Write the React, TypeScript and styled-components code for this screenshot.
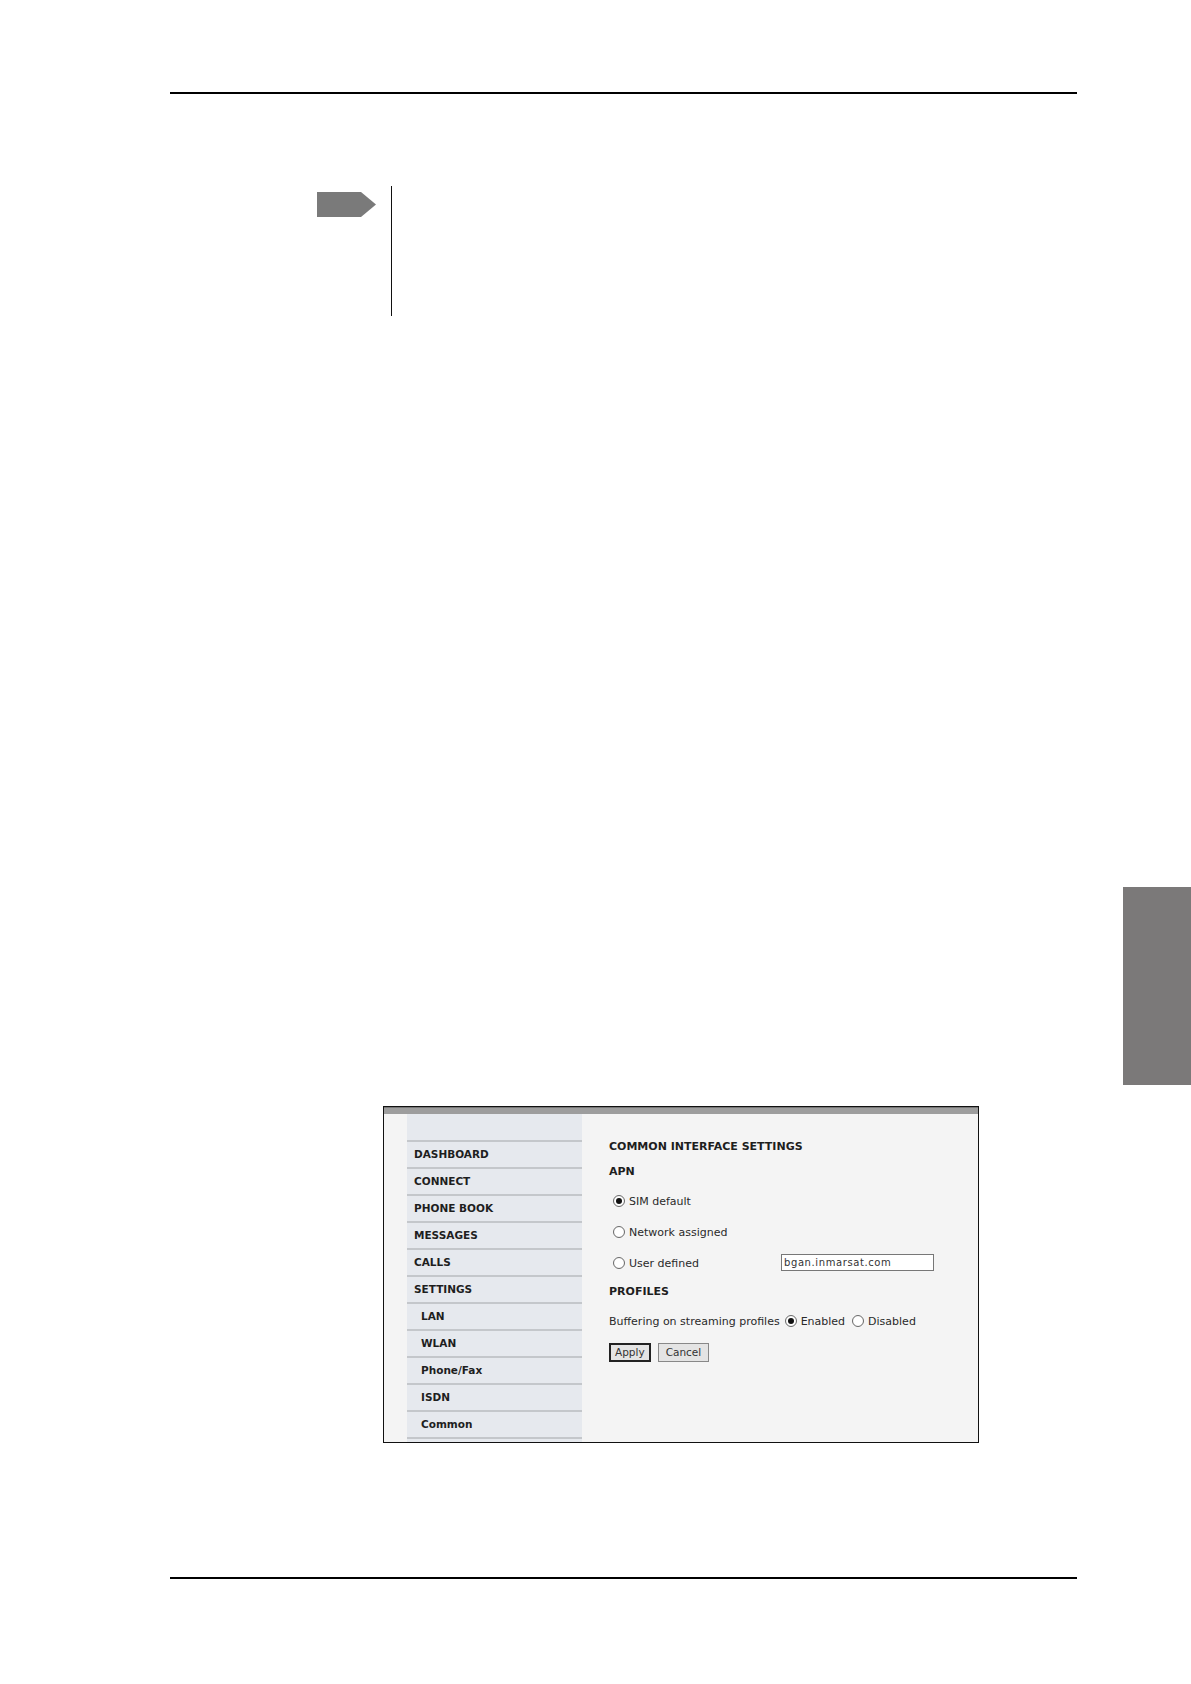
import styled, { createGlobalStyle } from "styled-components";

const GlobalStyle = createGlobalStyle`
  html, body {
    margin: 0;
    padding: 0;
    background: #fff;
  }
  body {
    font-family: "DejaVu Sans", Verdana, sans-serif;
    color: #1e1e1e;
  }
`;

const Page = styled.div`
  width: 1191px;
  height: 1684px;
  box-sizing: border-box;
  padding-top: 92px;
  display: flex;
  flex-direction: column;
  background: #fff;
  overflow: hidden;
`;

const Rule = styled.div<{ $top?: number }>`
  margin: ${(p) => p.$top ?? 0}px 0 0 170px;
  width: 907px;
  height: 2px;
  background: #000;
  flex-shrink: 0;
`;

const Note = styled.div`
  display: flex;
  margin: 92px 0 0 317px;
  height: 130px;
`;

const NoteMarker = styled.div`
  width: 74px;
  padding-top: 6px;
`;

const NoteLine = styled.div`
  width: 1px;
  background: #111;
`;

const TabRow = styled.div`
  display: flex;
  justify-content: flex-end;
  margin-top: 571px;
`;

const SideTab = styled.div`
  width: 68px;
  height: 198px;
  background: #7b7979;
`;

const Panel = styled.div`
  margin: 21px 0 0 383px;
  width: 596px;
  height: 337px;
  box-sizing: border-box;
  border: 1px solid #111;
  background: #f4f4f4;
  display: flex;
  flex-direction: column;
`;

const TopBar = styled.div`
  height: 7px;
  background: #9d9d9d;
  border-top: 1px solid #777;
  box-sizing: border-box;
`;

const Body = styled.div`
  flex: 1;
  display: flex;
`;

const Sidebar = styled.nav`
  margin-left: 23px;
  width: 175px;
  background: #e6e9ee;
  padding-top: 26px;
  display: flex;
  flex-direction: column;
`;

const NavItem = styled.div<{ $sub?: boolean }>`
  height: 25px;
  line-height: 24px;
  border-top: 2px solid #c4c7cb;
  padding-left: ${(p) => (p.$sub ? 14 : 7)}px;
  font-size: 10.5px;
  font-weight: bold;
  color: #1e1e1e;
`;

const NavEnd = styled.div`
  border-top: 2px solid #c4c7cb;
`;

const Content = styled.div`
  padding-left: 27px;
  display: flex;
  flex-direction: column;
`;

const Heading = styled.div<{ $top: number }>`
  margin-top: ${(p) => p.$top}px;
  height: 14px;
  line-height: 14px;
  font-size: 11px;
  font-weight: bold;
  color: #1e1e1e;
`;

const Row = styled.div<{ $top: number; $indent?: number }>`
  margin-top: ${(p) => p.$top}px;
  height: 20px;
  display: flex;
  align-items: center;
  padding-left: ${(p) => p.$indent ?? 0}px;
  font-size: 11px;
  color: #2a2a2a;
`;

const Option = styled.label<{ $width?: number }>`
  display: flex;
  align-items: center;
  width: ${(p) => (p.$width ? `${p.$width}px` : "auto")};
`;

const Radio = styled.span<{ $checked?: boolean }>`
  width: 12px;
  height: 12px;
  box-sizing: border-box;
  border-radius: 50%;
  border: 1px solid #6a6a6a;
  background: radial-gradient(circle, #fff 55%, #e4e4e4 100%);
  margin-right: 4px;
  display: flex;
  align-items: center;
  justify-content: center;
  &::after {
    content: "";
    display: ${(p) => (p.$checked ? "block" : "none")};
    width: 6px;
    height: 6px;
    border-radius: 50%;
    background: #111;
  }
`;

const Label = styled.span<{ $gap?: number }>`
  margin-right: ${(p) => p.$gap ?? 0}px;
`;

const TextBox = styled.div`
  width: 153px;
  height: 17px;
  margin-top: -1px;
  box-sizing: border-box;
  border: 1px solid #777;
  background: #fff;
  font-size: 10px;
  line-height: 15px;
  padding-left: 2px;
  letter-spacing: 0.6px;
  color: #333;
`;

const Buttons = styled.div`
  margin-top: 12px;
  display: flex;
  gap: 7px;
`;

const Button = styled.button<{ $primary?: boolean }>`
  height: 19px;
  box-sizing: border-box;
  padding: 0 ${(p) => (p.$primary ? 4 : 7)}px;
  border: ${(p) => (p.$primary ? "2px solid #222" : "1px solid #888")};
  background: #e4e4e4;
  font-family: "DejaVu Sans", Verdana, sans-serif;
  font-size: 10.5px;
  color: #333;
  line-height: 15px;
`;

const navItems: { label: string; sub?: boolean }[] = [
  { label: "DASHBOARD" },
  { label: "CONNECT" },
  { label: "PHONE BOOK" },
  { label: "MESSAGES" },
  { label: "CALLS" },
  { label: "SETTINGS" },
  { label: "LAN", sub: true },
  { label: "WLAN", sub: true },
  { label: "Phone/Fax", sub: true },
  { label: "ISDN", sub: true },
  { label: "Common", sub: true },
];

const NoteArrow = () => (
  <svg width="59" height="25" viewBox="0 0 59 25">
    <polygon points="0,0 44,0 59,12.5 44,25 0,25" fill="#7a7a7a" />
  </svg>
);

export default function App() {
  return (
    <>
      <GlobalStyle />
      <Page>
        <Rule />
        <Note>
          <NoteMarker>
            <NoteArrow />
          </NoteMarker>
          <NoteLine />
        </Note>
        <TabRow>
          <SideTab />
        </TabRow>
        <Panel>
          <TopBar />
          <Body>
            <Sidebar>
              {navItems.map((item) => (
                <NavItem key={item.label} $sub={item.sub}>
                  {item.label}
                </NavItem>
              ))}
              <NavEnd />
            </Sidebar>
            <Content>
              <Heading $top={26}>COMMON INTERFACE SETTINGS</Heading>
              <Heading $top={11}>APN</Heading>
              <Row $top={12} $indent={4}>
                <Option>
                  <Radio $checked />
                  <Label>SIM default</Label>
                </Option>
              </Row>
              <Row $top={11} $indent={4}>
                <Option>
                  <Radio />
                  <Label>Network assigned</Label>
                </Option>
              </Row>
              <Row $top={11} $indent={4}>
                <Option $width={168}>
                  <Radio />
                  <Label>User defined</Label>
                </Option>
                <TextBox>bgan.inmarsat.com</TextBox>
              </Row>
              <Heading $top={12}>PROFILES</Heading>
              <Row $top={12}>
                <Label $gap={5}>Buffering on streaming profiles</Label>
                <Option>
                  <Radio $checked />
                  <Label $gap={7}>Enabled</Label>
                </Option>
                <Option>
                  <Radio />
                  <Label>Disabled</Label>
                </Option>
              </Row>
              <Buttons>
                <Button $primary>Apply</Button>
                <Button>Cancel</Button>
              </Buttons>
            </Content>
          </Body>
        </Panel>
        <Rule $top={134} />
      </Page>
    </>
  );
}
